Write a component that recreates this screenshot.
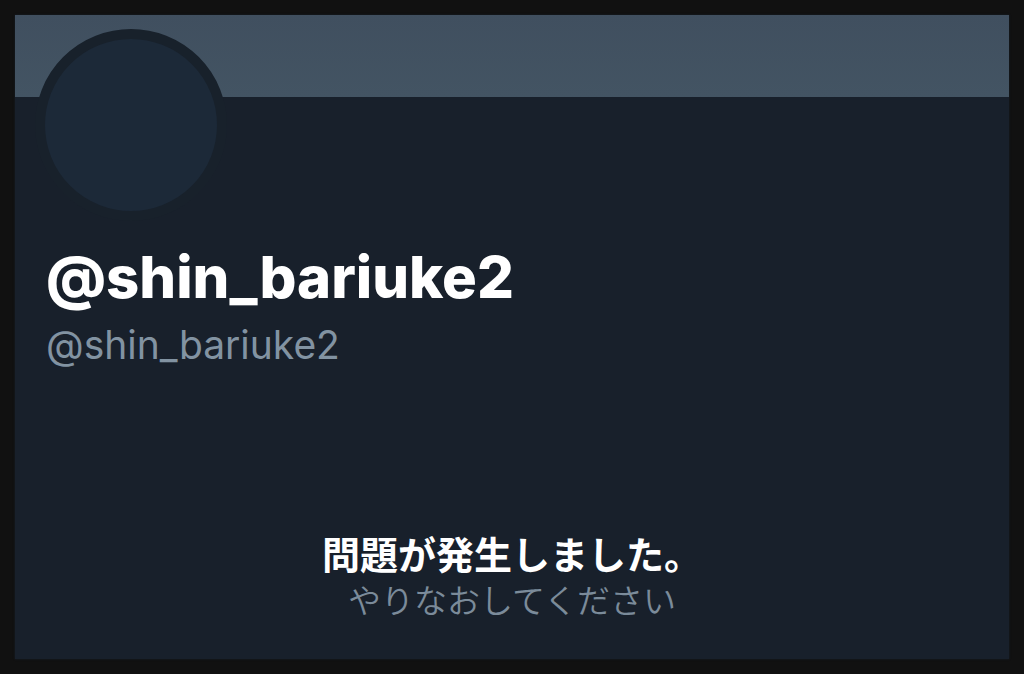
<svelte:head><title>@shin_bariuke2</title></svelte:head>

<main class="frame">
  <section class="profile">
    <div class="banner"></div>
    <header class="identity">
      <div class="avatar"></div>
      <h1>@shin_bariuke2</h1>
      <p class="handle">@shin_bariuke2</p>
    </header>
    <div class="notice" role="status">
      <h2>問題が発生しました。</h2>
      <p>やりなおしてください</p>
    </div>
  </section>
</main>

<style>
  :global(body) {
    margin: 0;
    background: #111111;
  }
  .frame {
    box-sizing: border-box;
    min-height: 100vh;
    padding: 15px;
    display: flex;
    background: #111111;
    font-family: Inter, "Noto Sans CJK JP", sans-serif;
  }
  .profile {
    flex: 1;
    display: flex;
    flex-direction: column;
    background: #18202b;
    box-shadow: 0 0 2px #18202b;
  }
  .banner {
    height: 82px;
    background: linear-gradient(#404f5f, #435463);
  }
  .identity {
    padding: 0 31px;
  }
  .avatar {
    box-sizing: content-box;
    width: 172px;
    height: 172px;
    margin: -68px 0 0 -11px;
    border: 10px solid #18212b;
    border-radius: 50%;
    background: #1c2938;
  }
  h1, h2, p {
    margin: 0;
  }
  h1 {
    margin-top: 24px;
    color: #ffffff;
    font-size: 58px;
    line-height: 64px;
    font-weight: 800;
  }
  .handle {
    margin-top: 12px;
    color: #8293a2;
    font-size: 39px;
    line-height: 48px;
  }
  .notice {
    margin-top: auto;
    padding-bottom: 36px;
    text-align: center;
  }
  h2 {
    color: #ffffff;
    font-size: 38px;
    line-height: 48px;
    font-weight: 700;
  }
  .notice p {
    color: #7b8b9a;
    font-size: 33px;
    line-height: 44px;
    font-weight: 350;
  }
</style>
